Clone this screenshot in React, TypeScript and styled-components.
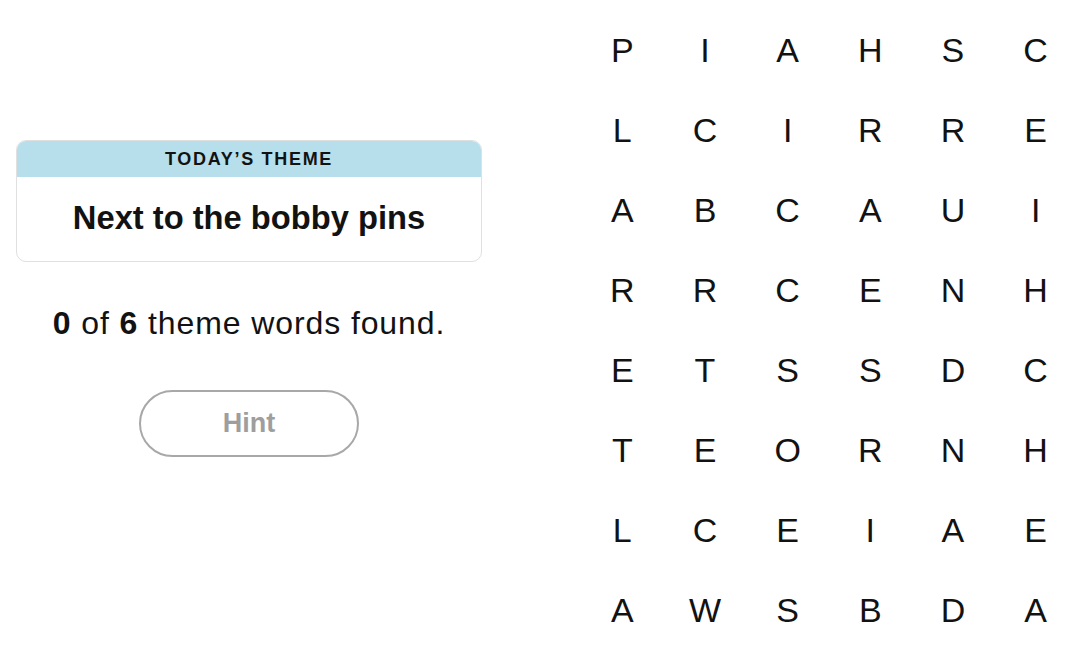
import React from "react";
import styled, { createGlobalStyle } from "styled-components";

const GlobalStyle = createGlobalStyle`
    html, body {
        margin: 0;
        padding: 0;
        background: #ffffff;
    }
    body {
        font-family: "Liberation Sans", Arial, sans-serif;
        color: #121212;
    }
`;

const letters = [
    "PIAHSC",
    "LCIRRE",
    "ABCAUI",
    "RRCENH",
    "ETSSDC",
    "TEORNH",
    "LCEIAE",
    "AWSBDA",
];

export default function App() {
    return (
        <>
            <GlobalStyle />
            <Page>
                <SidePanel>
                    <ThemeCard>
                        <ThemeHeader>TODAY’S THEME</ThemeHeader>
                        <ThemeBody>Next to the bobby pins</ThemeBody>
                    </ThemeCard>
                    <Progress>
                        <b>0</b> of <b>6</b> theme words found.
                    </Progress>
                    <HintButton disabled>Hint</HintButton>
                </SidePanel>
                <Board>
                    {letters.map((row, r) =>
                        row.split("").map((ch, c) => (
                            <Cell key={`${r}-${c}`}>{ch}</Cell>
                        )),
                    )}
                </Board>
            </Page>
        </>
    );
}

const Page = styled.main`
    display: flex;
    height: 662px;
    width: 1080px;
    overflow: hidden;
`;

const SidePanel = styled.section`
    width: 466px;
    padding: 140px 16px 0;
    display: flex;
    flex-direction: column;
    align-items: center;
`;

const ThemeCard = styled.div`
    width: 100%;
    box-sizing: border-box;
    border: 1px solid #e0e0e0;
    border-radius: 10px;
    overflow: hidden;
`;

const ThemeHeader = styled.div`
    height: 35px;
    background-color: #b6deeb;
    display: flex;
    align-items: center;
    justify-content: center;
    font-size: 18px;
    font-weight: 700;
    letter-spacing: 1.7px;
    padding-top: 1px;
`;

const ThemeBody = styled.div`
    height: 84px;
    display: flex;
    align-items: center;
    justify-content: center;
    font-size: 32.7px;
    font-weight: 700;
    padding-bottom: 3px;
    box-sizing: border-box;
`;

const Progress = styled.p`
    margin: 41px 0 0;
    height: 40px;
    line-height: 40px;
    font-size: 32px;
    letter-spacing: 0.9px;
    b {
        font-weight: 700;
    }
`;

const HintButton = styled.button`
    margin-top: 47px;
    width: 220px;
    height: 67px;
    box-sizing: border-box;
    border: 2px solid #a8a8a8;
    border-radius: 34px;
    background: #ffffff;
    color: #9e9e9e;
    font-family: "Liberation Sans", Arial, sans-serif;
    font-size: 27px;
    font-weight: 700;
    padding-bottom: 2px;
`;

const Board = styled.section`
    margin-left: 83px;
    padding-top: 10px;
    display: grid;
    grid-template-columns: repeat(6, 82.67px);
    grid-auto-rows: 80px;
    align-content: start;
`;

const Cell = styled.div`
    display: flex;
    align-items: center;
    justify-content: center;
    font-size: 34px;
    color: #121212;
`;
